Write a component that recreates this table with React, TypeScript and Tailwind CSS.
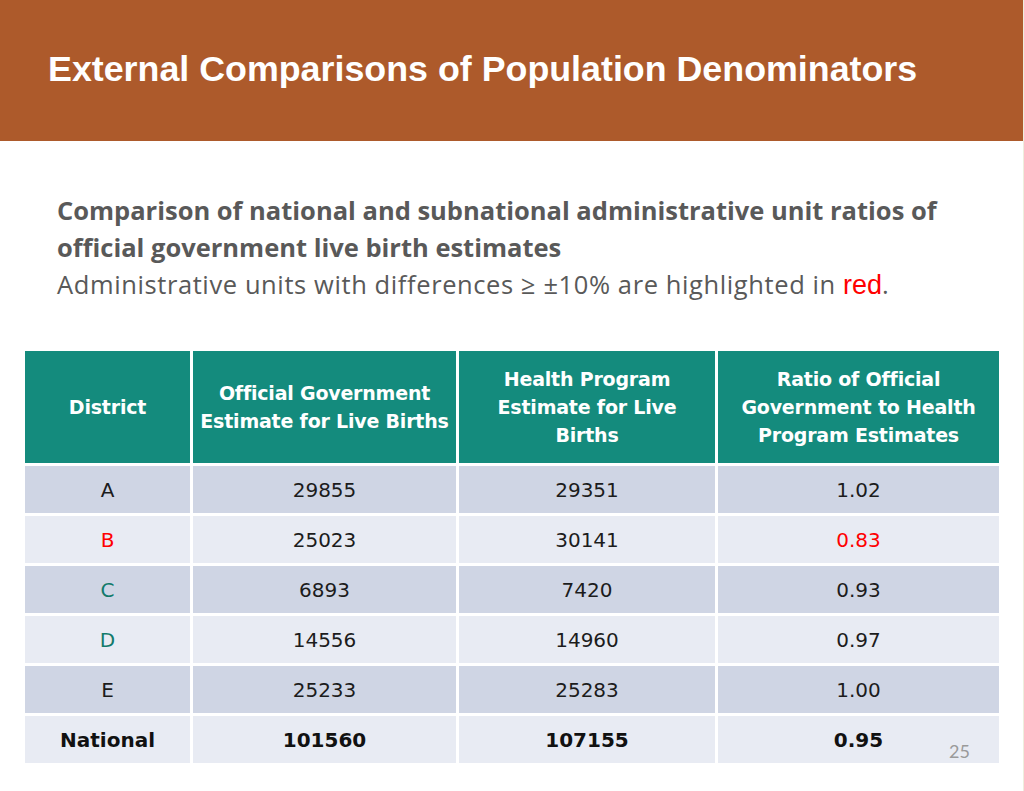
type Row = {
  district: string;
  districtColor?: string;
  official: string;
  program: string;
  ratio: string;
  ratioColor?: string;
  bold?: boolean;
};

const ROWS: Row[] = [
  { district: 'A', official: '29855', program: '29351', ratio: '1.02' },
  { district: 'B', districtColor: 'text-[#ff0000]', official: '25023', program: '30141', ratio: '0.83', ratioColor: 'text-[#ff0000]' },
  { district: 'C', districtColor: 'text-[#127a6b]', official: '6893', program: '7420', ratio: '0.93' },
  { district: 'D', districtColor: 'text-[#127a6b]', official: '14556', program: '14960', ratio: '0.97' },
  { district: 'E', official: '25233', program: '25283', ratio: '1.00' },
  { district: 'National', official: '101560', program: '107155', ratio: '0.95', bold: true },
];

function HeadCell({ children }: { children: React.ReactNode }) {
  return (
    <div className="bg-[#148b7d] text-white font-bold text-[19px] tracking-[-0.2px] leading-[28px] flex items-center justify-center text-center whitespace-nowrap">
      <div>{children}</div>
    </div>
  );
}

export default function App() {
  return (
    <div className="relative w-[1024px] h-[791px] bg-white overflow-hidden border-r border-[#eeeedd]">
      {/* title bar */}
      <div className="h-[141px] bg-[#ad5a2b] flex items-center pl-[48px] pb-[2px]">
        <h1 className="text-white font-bold text-[35.8px] font-['Liberation_Sans',Arial,sans-serif]">
          External Comparisons of Population Denominators
        </h1>
      </div>

      {/* subtitle */}
      <div className="pt-[51px] pl-[57px] text-[#595959] text-[25.5px] leading-[37px] font-['Open_Sans','Lato',sans-serif] whitespace-nowrap">
        <p className="font-bold">
          Comparison of national and subnational administrative unit ratios of
          <br />
          official government live birth estimates
        </p>
        <p className="tracking-[0.6px]">
          Administrative units with differences ≥ ±10% are highlighted in{' '}
          <span className="text-[#ff0000] text-[27px] tracking-normal font-['Liberation_Sans',Arial,sans-serif]">red</span>.
        </p>
      </div>

      {/* table */}
      <div className="mt-[47px] ml-[25px] grid grid-cols-[165px_263px_256px_281px] grid-rows-[112px_repeat(6,47px)] gap-[3px] font-['DejaVu_Sans',Verdana,sans-serif]">
        <HeadCell>District</HeadCell>
        <HeadCell>
          Official Government
          <br />
          Estimate for Live Births
        </HeadCell>
        <HeadCell>
          Health Program
          <br />
          Estimate for Live
          <br />
          Births
        </HeadCell>
        <HeadCell>
          Ratio of Official
          <br />
          Government to Health
          <br />
          Program Estimates
        </HeadCell>

        {ROWS.map((r, i) => {
          const bg = i % 2 === 0 ? 'bg-[#cfd5e4]' : 'bg-[#e8ebf3]';
          const weight = r.bold ? 'font-bold text-[#111]' : 'font-normal text-[#1c1c1c]';
          const cell = `${bg} ${weight} flex items-center justify-center text-[20px]`;
          return (
            <div key={r.district} className="contents">
              <div className={`${cell} ${r.districtColor ?? ''}`}>{r.district}</div>
              <div className={cell}>{r.official}</div>
              <div className={cell}>{r.program}</div>
              <div className={`${cell} ${r.ratioColor ?? ''}`}>{r.ratio}</div>
            </div>
          );
        })}
      </div>

      {/* slide number */}
      <div className="absolute left-[949px] top-[738px] text-[18px] text-[#9a9a9a] font-['Lato','Open_Sans',sans-serif]">
        25
      </div>
    </div>
  );
}
